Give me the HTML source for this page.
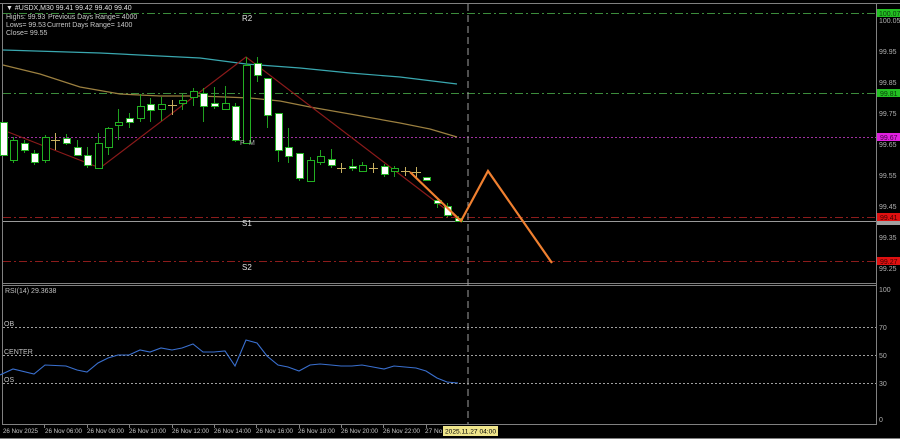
<!DOCTYPE html>
<html><head><meta charset="utf-8"><style>
html,body{margin:0;padding:0;background:#000;width:900px;height:439px;overflow:hidden}
svg{display:block}
text{font-family:"Liberation Sans",sans-serif}
</style></head><body>
<svg width="900" height="439" viewBox="0 0 900 439" xmlns="http://www.w3.org/2000/svg">
<rect width="900" height="439" fill="#000"/>
<line x1="0" y1="3.5" x2="900" y2="3.5" stroke="#808080"/>
<line x1="2.5" y1="3" x2="2.5" y2="424" stroke="#808080"/>
<line x1="876.5" y1="3" x2="876.5" y2="424" stroke="#808080"/>
<line x1="2" y1="283.5" x2="877" y2="283.5" stroke="#808080"/>
<line x1="2" y1="285.5" x2="877" y2="285.5" stroke="#808080"/>
<line x1="2" y1="424.5" x2="877" y2="424.5" stroke="#808080"/>
<line x1="0" y1="438.5" x2="900" y2="438.5" stroke="#808080"/>

<line x1="3" y1="13.5" x2="876" y2="13.5" stroke="#3c8c3c" stroke-dasharray="8,3,2,3"/>
<line x1="3" y1="93.5" x2="876" y2="93.5" stroke="#3c8c3c" stroke-dasharray="8,3,2,3"/>
<line x1="3" y1="137.5" x2="876" y2="137.5" stroke="#a030a0" stroke-dasharray="2,2"/>
<line x1="3" y1="217.5" x2="876" y2="217.5" stroke="#8c1c1c" stroke-dasharray="8,3,2,3"/>
<line x1="3" y1="221.5" x2="876" y2="221.5" stroke="#9a9a9a"/>
<line x1="3" y1="261.5" x2="876" y2="261.5" stroke="#8c1c1c" stroke-dasharray="8,3,2,3"/>

<polyline fill="none" stroke="#3aa8b0" stroke-width="1.2" points="3,50 100,53 200,58 246,64 300,68 350,73 400,77 457,84"/>
<polyline fill="none" stroke="#9c8040" stroke-width="1.2" points="3,65 40,74 80,87 120,94 160,96 200,96 250,98 280,101 310,107 350,114 400,123 430,129 457,137"/>

<polyline fill="none" stroke="#8b1a1a" stroke-width="1.2" points="3,130 100,168 246,57 461,221"/>

<line x1="468" y1="4" x2="468" y2="424" stroke="#a0a0a0" stroke-dasharray="7,4"/>

<g stroke-width="1">
<g stroke="#1fa01f">
<line x1="13.5" y1="137" x2="13.5" y2="163"/><line x1="45.5" y1="135" x2="45.5" y2="163"/>
<line x1="24.5" y1="140" x2="24.5" y2="153"/><line x1="34.5" y1="150" x2="34.5" y2="165"/>
<line x1="66.5" y1="134" x2="66.5" y2="145"/><line x1="77.5" y1="140" x2="77.5" y2="156"/>
<line x1="87.5" y1="147" x2="87.5" y2="168"/><line x1="98.5" y1="133" x2="98.5" y2="169"/>
<line x1="108.5" y1="127" x2="108.5" y2="155"/><line x1="118.5" y1="109" x2="118.5" y2="140"/>
<line x1="129.5" y1="113" x2="129.5" y2="128"/><line x1="140.5" y1="94" x2="140.5" y2="122"/>
<line x1="150.5" y1="98" x2="150.5" y2="122"/><line x1="161.5" y1="97" x2="161.5" y2="121"/>
<line x1="182.5" y1="94" x2="182.5" y2="110"/><line x1="193.5" y1="88" x2="193.5" y2="106"/>
<line x1="203.5" y1="88" x2="203.5" y2="122"/><line x1="214.5" y1="87" x2="214.5" y2="109"/>
<line x1="225.5" y1="86" x2="225.5" y2="109"/><line x1="235.5" y1="103" x2="235.5" y2="142"/>
<line x1="246.5" y1="57" x2="246.5" y2="143"/><line x1="257.5" y1="57" x2="257.5" y2="82"/>
<line x1="267.5" y1="78" x2="267.5" y2="128"/><line x1="278.5" y1="113" x2="278.5" y2="162"/>
<line x1="288.5" y1="128" x2="288.5" y2="163"/><line x1="299.5" y1="153" x2="299.5" y2="181"/>
<line x1="310.5" y1="157" x2="310.5" y2="181"/><line x1="320.5" y1="150" x2="320.5" y2="165"/>
<line x1="331.5" y1="149" x2="331.5" y2="168"/><line x1="352.5" y1="159" x2="352.5" y2="171"/>
<line x1="362.5" y1="162" x2="362.5" y2="171"/><line x1="384.5" y1="164" x2="384.5" y2="177"/>
<line x1="394.5" y1="166" x2="394.5" y2="177"/><line x1="437.5" y1="198" x2="437.5" y2="208"/>
<line x1="447.5" y1="203" x2="447.5" y2="217"/><line x1="458.5" y1="216" x2="458.5" y2="222"/>
</g>
<g fill="#000" stroke="#22b022">
<rect x="10.5" y="140.5" width="7" height="20"/><rect x="42.5" y="137.5" width="7" height="23"/>
<rect x="95.5" y="143.5" width="7" height="25"/><rect x="105.5" y="128.5" width="7" height="19"/>
<rect x="115.5" y="122.5" width="7" height="3"/><rect x="137.5" y="106.5" width="7" height="12"/>
<rect x="158.5" y="104.5" width="7" height="5"/><rect x="179.5" y="100.5" width="7" height="3"/>
<rect x="190.5" y="91.5" width="7" height="6"/><rect x="222.5" y="103.5" width="7" height="6"/>
<rect x="243.5" y="65.5" width="7" height="78"/><rect x="307.5" y="160.5" width="7" height="21"/>
<rect x="317.5" y="156.5" width="7" height="6"/><rect x="359.5" y="165.5" width="7" height="6"/>
<rect x="391.5" y="168.5" width="7" height="3"/>
</g>
<g fill="#fff" stroke="#22b022">
<rect x="0.5" y="122.5" width="7" height="33"/><rect x="21.5" y="143.5" width="7" height="7"/>
<rect x="31.5" y="153.5" width="7" height="9"/><rect x="63.5" y="138.5" width="7" height="5"/>
<rect x="74.5" y="147.5" width="7" height="8"/><rect x="84.5" y="155.5" width="7" height="10"/>
<rect x="126.5" y="118.5" width="7" height="4"/><rect x="147.5" y="104.5" width="7" height="6"/>
<rect x="200.5" y="93.5" width="7" height="13"/><rect x="211.5" y="103.5" width="7" height="3"/>
<rect x="232.5" y="106.5" width="7" height="34"/><rect x="254.5" y="63.5" width="7" height="12"/>
<rect x="264.5" y="78.5" width="7" height="37"/><rect x="275.5" y="113.5" width="7" height="37"/>
<rect x="285.5" y="147.5" width="7" height="9"/><rect x="296.5" y="153.5" width="7" height="25"/>
<rect x="328.5" y="159.5" width="7" height="6"/><rect x="349.5" y="166.5" width="7" height="2"/>
<rect x="381.5" y="166.5" width="7" height="8"/><rect x="423.5" y="177.5" width="7" height="3"/>
<rect x="434.5" y="200.5" width="7" height="3"/><rect x="444.5" y="206.5" width="7" height="9"/>
<rect x="455.5" y="218.5" width="7" height="3"/>
</g>
<g stroke="#c8b060">
<line x1="55.5" y1="133" x2="55.5" y2="150"/><line x1="51" y1="140.5" x2="60" y2="140.5"/>
<line x1="172.5" y1="100" x2="172.5" y2="115"/><line x1="168" y1="105.5" x2="177" y2="105.5"/>
<line x1="341.5" y1="163" x2="341.5" y2="173"/><line x1="337" y1="168.5" x2="346" y2="168.5"/>
<line x1="373.5" y1="163" x2="373.5" y2="173"/><line x1="369" y1="168.5" x2="378" y2="168.5"/>
<line x1="405.5" y1="167" x2="405.5" y2="176"/><line x1="401" y1="171.5" x2="410" y2="171.5"/>
<line x1="416.5" y1="167" x2="416.5" y2="177"/><line x1="412" y1="172.5" x2="421" y2="172.5"/>
</g>
</g>

<polyline fill="none" stroke="#f08030" stroke-width="2.2" points="410,172 461,221 488,171 552,263"/>

<g fill="#e0e0e0" font-size="7">
<text x="6" y="10">▼ #USDX,M30  99.41 99.42 99.40 99.40</text>
<text x="6" y="19" fill="#c8c8c8">Highs: 99.93</text><text x="48" y="19" fill="#c8c8c8">Previous Days Range= 4000</text>
<text x="6" y="27" fill="#c8c8c8">Lows= 99.53</text><text x="47" y="27" fill="#c8c8c8">Current Days Range= 1400</text>
<text x="6" y="35" fill="#c8c8c8">Close= 99.55</text>
<text x="242" y="21" font-size="8">R2</text>
<text x="242" y="226" font-size="8">S1</text>
<text x="242" y="270" font-size="8">S2</text>
<text x="240" y="145" fill="#b0b0b0">P</text><text x="249" y="145" fill="#b0b0b0">M</text>
</g>

<g fill="#b0b0b0" font-size="7">
<text x="879" y="23">100.05</text>
<text x="879" y="54">99.95</text>
<text x="879" y="85">99.85</text>
<text x="879" y="116">99.75</text>
<text x="879" y="147">99.65</text>
<text x="879" y="178">99.55</text>
<text x="879" y="209">99.45</text>
<text x="879" y="240">99.35</text>
<text x="879" y="271">99.25</text>
<text x="879" y="292">100</text>
<text x="879" y="330">70</text>
<text x="879" y="358">50</text>
<text x="879" y="386">30</text>
<text x="879" y="422">0</text>
</g>
<g font-size="7">
<rect x="877" y="9" width="23" height="8" fill="#22c022"/><text x="879" y="16" fill="#0a3a0a">100.07</text>
<rect x="877" y="89" width="23" height="8" fill="#22c022"/><text x="880" y="96" fill="#0a3a0a">99.81</text>
<rect x="877" y="133" width="23" height="8" fill="#e020e0"/><text x="880" y="140" fill="#400040">99.67</text>
<rect x="877" y="213" width="23" height="8" fill="#e01010"/><text x="880" y="220" fill="#400000">99.41</text>
<rect x="877" y="221" width="23" height="4" fill="#a0a0a0"/>
<rect x="877" y="257" width="23" height="8" fill="#e01010"/><text x="880" y="264" fill="#400000">99.27</text>
</g>

<line x1="3" y1="327.5" x2="876" y2="327.5" stroke="#a0a0a0" stroke-dasharray="2,2"/>
<line x1="3" y1="355.5" x2="876" y2="355.5" stroke="#a0a0a0" stroke-dasharray="2,2"/>
<line x1="3" y1="383.5" x2="876" y2="383.5" stroke="#a0a0a0" stroke-dasharray="2,2"/>
<g fill="#c0c0c0" font-size="7">
<text x="5" y="293">RSI(14) 29.3638</text>
<text x="4" y="326">OB</text>
<text x="4" y="354">CENTER</text>
<text x="4" y="382">OS</text>
</g>
<polyline fill="none" stroke="#3a70d0" stroke-width="1.1" points="0,375 13,369 34,374 45,365 66,366 77,370 87,372 98,363 108,358 118,355 129,355 140,350 150,352 161,348 172,350 182,348 193,344 203,352 214,352 225,351 235,366 246,340 257,343 267,356 278,365 288,367 299,371 310,365 320,364 331,365 341,366 352,366 362,365 373,367 384,369 394,366 405,367 416,368 426,371 437,378 447,382 458,383"/>

<g fill="#c8c8c8" font-size="6.5">
<text x="3" y="433" textLength="35" lengthAdjust="spacingAndGlyphs">26 Nov 2025</text>
<text x="45" y="433" textLength="37" lengthAdjust="spacingAndGlyphs">26 Nov 06:00</text>
<text x="87" y="433" textLength="37" lengthAdjust="spacingAndGlyphs">26 Nov 08:00</text>
<text x="129" y="433" textLength="37" lengthAdjust="spacingAndGlyphs">26 Nov 10:00</text>
<text x="172" y="433" textLength="37" lengthAdjust="spacingAndGlyphs">26 Nov 12:00</text>
<text x="214" y="433" textLength="37" lengthAdjust="spacingAndGlyphs">26 Nov 14:00</text>
<text x="256" y="433" textLength="37" lengthAdjust="spacingAndGlyphs">26 Nov 16:00</text>
<text x="298" y="433" textLength="37" lengthAdjust="spacingAndGlyphs">26 Nov 18:00</text>
<text x="341" y="433" textLength="37" lengthAdjust="spacingAndGlyphs">26 Nov 20:00</text>
<text x="383" y="433" textLength="37" lengthAdjust="spacingAndGlyphs">26 Nov 22:00</text>
<text x="425" y="433">27 No</text>
</g>
<g stroke="#808080">
<line x1="44.5" y1="425" x2="44.5" y2="428"/><line x1="87.5" y1="425" x2="87.5" y2="428"/>
<line x1="129.5" y1="425" x2="129.5" y2="428"/><line x1="172.5" y1="425" x2="172.5" y2="428"/>
<line x1="214.5" y1="425" x2="214.5" y2="428"/><line x1="256.5" y1="425" x2="256.5" y2="428"/>
<line x1="299.5" y1="425" x2="299.5" y2="428"/><line x1="341.5" y1="425" x2="341.5" y2="428"/>
<line x1="383.5" y1="425" x2="383.5" y2="428"/><line x1="426.5" y1="425" x2="426.5" y2="428"/>
</g>
<rect x="443" y="426" width="55" height="10" fill="#f0e68c"/>
<text x="445" y="433.5" font-size="6.5" fill="#000" textLength="51" lengthAdjust="spacingAndGlyphs">2025.11.27 04:00</text>
</svg>
</body></html>
